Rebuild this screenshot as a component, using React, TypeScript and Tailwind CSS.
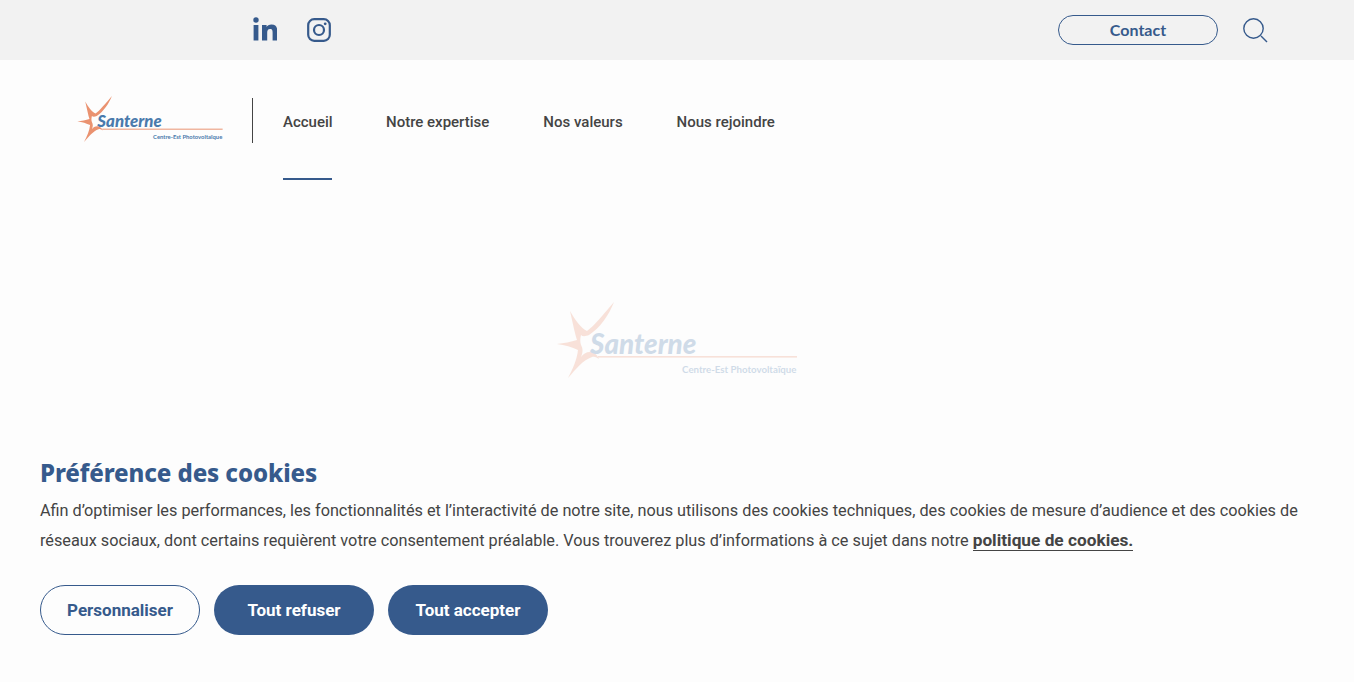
const BLUE = '#365a8c';

// Star + wordmark, used twice (header and faded loader)
function Logo({ className }: { className: string }) {
  return (
    <svg viewBox="0 0 240 76" className={className}>
      <path
        d="M57 0 C46 13 37 24 30 29 C24 26 18 18 13 9 C16 22 18 32 20 38 C14 40 7 41 0 42 C8 43 15 45 21 48 C20 57 16 67 11 76 C19 67 26 58 35 55 C38 54 40 56 42 57 C40 52 36 50 33 50 C29 50 26 52 24 55 C26 50 26 47 24 43 C23 40 23 37 24 33 C26 35 29 34 32 33 C43 26 52 13 57 0 Z"
        fill="#ea9270"
      />
      <rect x="41" y="54" width="199" height="1.6" fill="#ea9270" />
      <text x="33" y="52" fontSize="27.8" fontStyle="italic" fontWeight="900" fill="#4a7aac" fontFamily="Lato, sans-serif">
        Santerne
      </text>
      <text x="239.5" y="71" textAnchor="end" fontSize="9.7" fontWeight="700" fill="#4a7aac" fontFamily="Lato, sans-serif">
        Centre-Est Photovoltaïque
      </text>
    </svg>
  );
}

function LinkedinIcon() {
  return (
    <svg viewBox="0 0 24 24" className="w-6 h-6 mb-[2px]" fill={BLUE}>
      <circle cx="3" cy="3" r="2.7" />
      <rect x="0.6" y="8" width="4.8" height="15.5" />
      <path d="M9 8h4.6v2.1c.7-1.3 2.4-2.5 4.9-2.5 5 0 5.9 3.3 5.9 7.6v8.3h-4.8v-7.4c0-1.8 0-4-2.5-4s-2.9 1.9-2.9 3.9v7.5H9z" />
    </svg>
  );
}

function InstagramIcon() {
  return (
    <svg viewBox="0 0 24 24" className="w-6 h-6" fill="none" stroke={BLUE} strokeWidth="2.2">
      <rect x="1.2" y="1.2" width="21.6" height="21.6" rx="6" />
      <circle cx="12" cy="12" r="5" />
      <circle cx="18.2" cy="5.8" r="1.4" fill={BLUE} stroke="none" />
    </svg>
  );
}

function SearchIcon() {
  return (
    <svg viewBox="0 0 25 25" className="w-[25px] h-[25px] ml-[25px]" fill="none" stroke={BLUE} strokeWidth="1.4">
      <circle cx="10.5" cy="10.5" r="9.7" />
      <path d="M18 18l6 6" />
    </svg>
  );
}

export default function App() {
  return (
    <div className="h-[682px] overflow-hidden bg-white font-['Roboto',sans-serif]">
      <div className="w-[1354px] h-[682px] bg-[#fdfdfd] flex flex-col">
        <div className="h-[60px] bg-[#f2f2f2] flex items-center pl-[253px] pr-[86px] shrink-0">
          <LinkedinIcon />
          <div className="ml-[30px]"><InstagramIcon /></div>
          <button className="ml-auto w-40 h-[30px] rounded-[15px] border border-[#365a8c] text-[#365a8c] font-['Lato',sans-serif] font-bold text-base">Contact</button>
          <SearchIcon />
        </div>

        <div className="h-[120px] flex items-start pl-[77px] shrink-0">
          <Logo className="w-[146px] h-[46px] mt-[36px]" />
          <div className="w-px h-[45px] bg-[#444] ml-[29px] mt-[38px]" />
          <nav className="flex gap-[54px] ml-[30px] text-[#444] font-medium text-[15px]">
            <a className="w-[49px] whitespace-nowrap h-[120px] pt-[51px] border-b-2 border-[#365a8c]">Accueil</a>
            <a className="pt-[51px]">Notre expertise</a>
            <a className="pt-[51px]">Nos valeurs</a>
            <a className="pt-[51px]">Nous rejoindre</a>
          </nav>
        </div>

        <div className="flex justify-center mt-[122px] shrink-0 opacity-25">
          <Logo className="w-[240px] h-[76px]" />
        </div>

        <div className="mt-[81px] px-10">
          <h2 className="text-2xl font-extrabold text-[#365a8c] leading-7 font-['Noto_Sans',sans-serif] tracking-[-0.1px]">Préférence des cookies</h2>
          <p className="mt-[9px] text-[#444] text-[16.25px] leading-[30px]">
            Afin d’optimiser les performances, les fonctionnalités et l’interactivité de notre site, nous utilisons des cookies techniques, des cookies de mesure d’audience et des cookies de réseaux sociaux, dont certains requièrent votre consentement préalable. Vous trouverez plus d’informations à ce sujet dans notre{' '}
            <a className="font-bold text-[17.25px] leading-5 border-b border-[#444]">politique de cookies.</a>
          </p>
          <div className="flex gap-[14px] mt-[29px]">
            <button className="w-40 h-[50px] pt-px rounded-[25px] border border-[#365a8c] text-[#365a8c] font-bold text-[17px]">Personnaliser</button>
            <button className="w-40 h-[50px] pt-px rounded-[25px] bg-[#365a8c] text-white font-bold text-[17px]">Tout refuser</button>
            <button className="w-40 h-[50px] pt-px rounded-[25px] bg-[#365a8c] text-white font-bold text-[17px]">Tout accepter</button>
          </div>
        </div>
      </div>
    </div>
  );
}
